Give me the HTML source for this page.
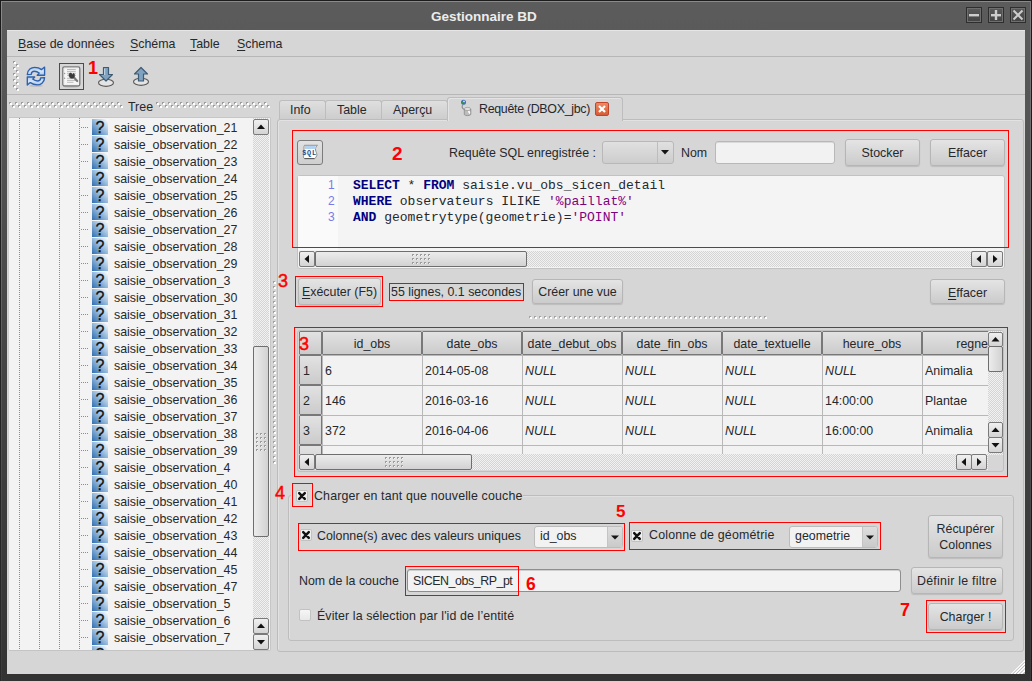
<!DOCTYPE html><html><head><meta charset="utf-8"><style>
*{box-sizing:border-box;margin:0;padding:0}
html,body{width:1032px;height:681px;overflow:hidden;background:#1a1a1a}
body{position:relative;font-family:"Liberation Sans",sans-serif;font-size:12.4px;color:#25282c}
.a{position:absolute}
svg{position:absolute;overflow:visible}
.t{position:absolute;white-space:nowrap;line-height:14px}
.wb{position:absolute;top:7px;width:16px;height:16px;border:1px solid #2e2e2e;background:linear-gradient(#5a5a5a,#434343);box-shadow:inset 0 0 0 1px #6e6e6e}
.btn{position:absolute;border:1px solid #b6b6b6;border-radius:3px;background:linear-gradient(#e4e4e4,#cbcbcb);box-shadow:0 1px 1px rgba(0,0,0,.12)}
.btn>span{position:absolute;left:0;right:0;text-align:center;white-space:nowrap;line-height:14px}
.red{position:absolute;border:1px solid #f00}
.num{position:absolute;color:#f00;font-weight:bold;font-size:17px;line-height:18px;white-space:nowrap}
.hl{position:absolute;height:1px;background:#b9b9b9}
.u{text-decoration:underline;text-underline-offset:1.5px}
.mono{font-family:"Liberation Mono",monospace;font-size:13px;line-height:16px}
.kw{color:#000080;font-weight:bold}
.st{color:#7f007f}
.cell{position:absolute;white-space:nowrap;line-height:14px}
.i{font-style:italic}
</style></head><body>
<div class="a" style="left:0px;top:0px;width:1032px;height:681px;background:linear-gradient(#5c5c5c 0px,#5a5a5a 30px,#474747 330px,#333 681px)"></div>
<div class="a" style="left:0px;top:0px;width:1px;height:681px;background:linear-gradient(#1a1a1a,#2a2a2a)"></div>
<div class="a" style="left:0px;top:0px;width:1032px;height:1px;background:#1c1c1c"></div>
<div class="a" style="left:1031px;top:0px;width:1px;height:681px;background:#1c1c1c"></div>
<div class="a" style="left:1px;top:1px;width:1px;height:680px;background:linear-gradient(#8a8a8a,#555 400px,#3a3a3a)"></div>
<div class="a" style="left:1px;top:1px;width:1030px;height:1px;background:#8a8a8a"></div>
<div class="a" style="left:1030px;top:1px;width:1px;height:680px;background:linear-gradient(#7a7a7a,#5e5e5e 300px,#3a3a3a)"></div>
<div class="t" style="left:431px;top:10px;color:#ececec;font-weight:bold;font-size:13.5px">Gestionnaire BD</div>
<div class="wb" style="left:966px"></div>
<div class="wb" style="left:988px"></div>
<div class="wb" style="left:1010px"></div>
<svg style="left:966px;top:7px" width="16" height="16"><rect x="3" y="7" width="10" height="2.4" fill="#cdcdcd"/></svg>
<svg style="left:988px;top:7px" width="16" height="16"><rect x="3" y="7" width="10" height="2.4" fill="#cdcdcd"/><rect x="6.8" y="3" width="2.4" height="10" fill="#cdcdcd"/></svg>
<svg style="left:1010px;top:7px" width="16" height="16"><path d="M3.5 3.5L12.5 12.5M12.5 3.5L3.5 12.5" stroke="#cdcdcd" stroke-width="2"/></svg>
<div class="a" style="left:7px;top:30px;width:1018px;height:644px;background:#d6d6d6"></div>
<div class="a" style="left:7px;top:30px;width:1018px;height:1px;background:#e6e6e6"></div>
<div class="t" style="left:18px;top:37px;"><span class="u">B</span>ase de données</div>
<div class="t" style="left:130px;top:37px;"><span class="u">S</span>chéma</div>
<div class="t" style="left:190px;top:37px;"><span class="u">T</span>able</div>
<div class="t" style="left:237px;top:37px;"><span class="u">S</span>chema</div>
<div class="a" style="left:7px;top:56px;width:1018px;height:1px;background:#b7b7b7"></div>
<svg style="left:0;top:0" width="30" height="100"><rect x="13" y="61" width="2" height="2" fill="#9a9a9a"/><rect x="14" y="62" width="2" height="2" fill="#fff"/><rect x="16" y="64" width="2" height="2" fill="#9a9a9a"/><rect x="17" y="65" width="2" height="2" fill="#fff"/><rect x="13" y="67" width="2" height="2" fill="#9a9a9a"/><rect x="14" y="68" width="2" height="2" fill="#fff"/><rect x="16" y="70" width="2" height="2" fill="#9a9a9a"/><rect x="17" y="71" width="2" height="2" fill="#fff"/><rect x="13" y="73" width="2" height="2" fill="#9a9a9a"/><rect x="14" y="74" width="2" height="2" fill="#fff"/><rect x="16" y="76" width="2" height="2" fill="#9a9a9a"/><rect x="17" y="77" width="2" height="2" fill="#fff"/><rect x="13" y="79" width="2" height="2" fill="#9a9a9a"/><rect x="14" y="80" width="2" height="2" fill="#fff"/><rect x="16" y="82" width="2" height="2" fill="#9a9a9a"/><rect x="17" y="83" width="2" height="2" fill="#fff"/><rect x="13" y="85" width="2" height="2" fill="#9a9a9a"/><rect x="14" y="86" width="2" height="2" fill="#fff"/><rect x="16" y="88" width="2" height="2" fill="#9a9a9a"/><rect x="17" y="89" width="2" height="2" fill="#fff"/></svg>
<svg style="left:24px;top:64px" width="24" height="24" viewBox="0 0 24 24">
<defs><linearGradient id="rg" x1="0" y1="0" x2="0" y2="1"><stop offset="0" stop-color="#9fc0e6"/><stop offset=".5" stop-color="#d6e6f7"/><stop offset="1" stop-color="#a9c7ea"/></linearGradient></defs>
<ellipse cx="12" cy="21.8" rx="7" ry="1.2" fill="#000" opacity=".10"/>
<g id="ra"><path d="M3.3 10.6 C3.5 5.5 7.5 3.3 10.5 3.3 C13.5 3.3 15.8 4.2 17.6 5.6 L20.6 3.1 L20.6 11.2 L13.2 11.2 L15.2 9.1 C13.8 7.9 12.2 7.2 10.5 7.2 C8.8 7.2 7.3 8.3 7.3 10.3 Z" fill="url(#rg)" stroke="#2f62ad" stroke-width="1.35" stroke-linejoin="round"/></g>
<path d="M3.3 10.6 C3.5 5.5 7.5 3.3 10.5 3.3 C13.5 3.3 15.8 4.2 17.6 5.6 L20.6 3.1 L20.6 11.2 L13.2 11.2 L15.2 9.1 C13.8 7.9 12.2 7.2 10.5 7.2 C8.8 7.2 7.3 8.3 7.3 10.3 Z" transform="rotate(180 11.95 12.1)" fill="url(#rg)" stroke="#2f62ad" stroke-width="1.35" stroke-linejoin="round"/>
</svg>
<svg style="left:61px;top:65px" width="21" height="23" viewBox="0 0 21 23">
<ellipse cx="10" cy="21.4" rx="8" ry="1.2" fill="#000" opacity=".16"/>
<rect x="1.8" y="1.8" width="17" height="19" rx="1.6" fill="#fdfdfd" stroke="#787878" stroke-width="1.3"/>
<rect x="3.2" y="3.2" width="14" height="16" fill="#f6f6f6" stroke="#e2e2e2" stroke-width=".5"/>
<path d="M6 4.5h8.8M6 6.4h8.8M6 8.3h8.8M6 10.3h8.8M6 13.3h8.8M6 15.4h8.8M6 17.3h6.5" stroke="#b2b2b2" stroke-width=".9"/>
<circle cx="3.6" cy="8.5" r=".7" fill="#999"/><circle cx="3.6" cy="13.3" r=".7" fill="#999"/>
<path d="M12.5 12 L16.2 16" stroke="#7a7a7a" stroke-width="2.2" stroke-linecap="round"/>
<path d="M8.1 9.6 C8.2 8.3 9.3 7.9 10.2 8.1 L11.2 9.8 L12.7 8.3 C13.9 9.2 14 11.6 12.6 12.8 C11 13.9 8.5 13.2 8.1 11 Z" fill="#3a3a3a" stroke="#3a3a3a" stroke-width=".6" stroke-linejoin="round"/>
</svg>
<div class="red" style="left:59px;top:63px;width:25px;height:27px"></div>
<div class="num" style="left:88px;top:59px;font-size:18px">1</div>
<svg style="left:97px;top:66px" width="19" height="22" viewBox="0 0 19 22">
<ellipse cx="9" cy="16.8" rx="7.5" ry="3.6" fill="#e4e4e4" stroke="#5a5a5a" stroke-width="1.1"/>
<path d="M6.5 1.5 H11.5 V8.5 H15.5 L9 15 L2.5 8.5 H6.5 Z" fill="#7fa2c0" stroke="#3d5b75" stroke-width="1.2" stroke-linejoin="round"/>
<path d="M7.6 2.5 V9" stroke="#b9d0e2" stroke-width="1.2"/>
</svg>
<svg style="left:132px;top:66px" width="19" height="22" viewBox="0 0 19 22">
<ellipse cx="9" cy="15.8" rx="7.5" ry="3.6" fill="#e4e4e4" stroke="#5a5a5a" stroke-width="1.1"/>
<path d="M6.5 15 V8 H2.5 L9 1.5 L15.5 8 H11.5 V15 Z" fill="#7fa2c0" stroke="#3d5b75" stroke-width="1.2" stroke-linejoin="round"/>
</svg>
<div class="a" style="left:7px;top:94px;width:1018px;height:1px;background:#b7b7b7"></div>
<svg style="left:0;top:0" width="280" height="120"><rect x="9" y="102" width="2" height="2" fill="#9c9c9c"/><rect x="10" y="103" width="2" height="2" fill="#fff"/><rect x="12" y="105" width="2" height="2" fill="#9c9c9c"/><rect x="13" y="106" width="2" height="2" fill="#fff"/><rect x="15" y="102" width="2" height="2" fill="#9c9c9c"/><rect x="16" y="103" width="2" height="2" fill="#fff"/><rect x="18" y="105" width="2" height="2" fill="#9c9c9c"/><rect x="19" y="106" width="2" height="2" fill="#fff"/><rect x="21" y="102" width="2" height="2" fill="#9c9c9c"/><rect x="22" y="103" width="2" height="2" fill="#fff"/><rect x="24" y="105" width="2" height="2" fill="#9c9c9c"/><rect x="25" y="106" width="2" height="2" fill="#fff"/><rect x="27" y="102" width="2" height="2" fill="#9c9c9c"/><rect x="28" y="103" width="2" height="2" fill="#fff"/><rect x="30" y="105" width="2" height="2" fill="#9c9c9c"/><rect x="31" y="106" width="2" height="2" fill="#fff"/><rect x="33" y="102" width="2" height="2" fill="#9c9c9c"/><rect x="34" y="103" width="2" height="2" fill="#fff"/><rect x="36" y="105" width="2" height="2" fill="#9c9c9c"/><rect x="37" y="106" width="2" height="2" fill="#fff"/><rect x="39" y="102" width="2" height="2" fill="#9c9c9c"/><rect x="40" y="103" width="2" height="2" fill="#fff"/><rect x="42" y="105" width="2" height="2" fill="#9c9c9c"/><rect x="43" y="106" width="2" height="2" fill="#fff"/><rect x="45" y="102" width="2" height="2" fill="#9c9c9c"/><rect x="46" y="103" width="2" height="2" fill="#fff"/><rect x="48" y="105" width="2" height="2" fill="#9c9c9c"/><rect x="49" y="106" width="2" height="2" fill="#fff"/><rect x="51" y="102" width="2" height="2" fill="#9c9c9c"/><rect x="52" y="103" width="2" height="2" fill="#fff"/><rect x="54" y="105" width="2" height="2" fill="#9c9c9c"/><rect x="55" y="106" width="2" height="2" fill="#fff"/><rect x="57" y="102" width="2" height="2" fill="#9c9c9c"/><rect x="58" y="103" width="2" height="2" fill="#fff"/><rect x="60" y="105" width="2" height="2" fill="#9c9c9c"/><rect x="61" y="106" width="2" height="2" fill="#fff"/><rect x="63" y="102" width="2" height="2" fill="#9c9c9c"/><rect x="64" y="103" width="2" height="2" fill="#fff"/><rect x="66" y="105" width="2" height="2" fill="#9c9c9c"/><rect x="67" y="106" width="2" height="2" fill="#fff"/><rect x="69" y="102" width="2" height="2" fill="#9c9c9c"/><rect x="70" y="103" width="2" height="2" fill="#fff"/><rect x="72" y="105" width="2" height="2" fill="#9c9c9c"/><rect x="73" y="106" width="2" height="2" fill="#fff"/><rect x="75" y="102" width="2" height="2" fill="#9c9c9c"/><rect x="76" y="103" width="2" height="2" fill="#fff"/><rect x="78" y="105" width="2" height="2" fill="#9c9c9c"/><rect x="79" y="106" width="2" height="2" fill="#fff"/><rect x="81" y="102" width="2" height="2" fill="#9c9c9c"/><rect x="82" y="103" width="2" height="2" fill="#fff"/><rect x="84" y="105" width="2" height="2" fill="#9c9c9c"/><rect x="85" y="106" width="2" height="2" fill="#fff"/><rect x="87" y="102" width="2" height="2" fill="#9c9c9c"/><rect x="88" y="103" width="2" height="2" fill="#fff"/><rect x="90" y="105" width="2" height="2" fill="#9c9c9c"/><rect x="91" y="106" width="2" height="2" fill="#fff"/><rect x="93" y="102" width="2" height="2" fill="#9c9c9c"/><rect x="94" y="103" width="2" height="2" fill="#fff"/><rect x="96" y="105" width="2" height="2" fill="#9c9c9c"/><rect x="97" y="106" width="2" height="2" fill="#fff"/><rect x="99" y="102" width="2" height="2" fill="#9c9c9c"/><rect x="100" y="103" width="2" height="2" fill="#fff"/><rect x="102" y="105" width="2" height="2" fill="#9c9c9c"/><rect x="103" y="106" width="2" height="2" fill="#fff"/><rect x="105" y="102" width="2" height="2" fill="#9c9c9c"/><rect x="106" y="103" width="2" height="2" fill="#fff"/><rect x="108" y="105" width="2" height="2" fill="#9c9c9c"/><rect x="109" y="106" width="2" height="2" fill="#fff"/><rect x="111" y="102" width="2" height="2" fill="#9c9c9c"/><rect x="112" y="103" width="2" height="2" fill="#fff"/><rect x="114" y="105" width="2" height="2" fill="#9c9c9c"/><rect x="115" y="106" width="2" height="2" fill="#fff"/><rect x="117" y="102" width="2" height="2" fill="#9c9c9c"/><rect x="118" y="103" width="2" height="2" fill="#fff"/><rect x="120" y="105" width="2" height="2" fill="#9c9c9c"/><rect x="121" y="106" width="2" height="2" fill="#fff"/><rect x="156" y="102" width="2" height="2" fill="#9c9c9c"/><rect x="157" y="103" width="2" height="2" fill="#fff"/><rect x="159" y="105" width="2" height="2" fill="#9c9c9c"/><rect x="160" y="106" width="2" height="2" fill="#fff"/><rect x="162" y="102" width="2" height="2" fill="#9c9c9c"/><rect x="163" y="103" width="2" height="2" fill="#fff"/><rect x="165" y="105" width="2" height="2" fill="#9c9c9c"/><rect x="166" y="106" width="2" height="2" fill="#fff"/><rect x="168" y="102" width="2" height="2" fill="#9c9c9c"/><rect x="169" y="103" width="2" height="2" fill="#fff"/><rect x="171" y="105" width="2" height="2" fill="#9c9c9c"/><rect x="172" y="106" width="2" height="2" fill="#fff"/><rect x="174" y="102" width="2" height="2" fill="#9c9c9c"/><rect x="175" y="103" width="2" height="2" fill="#fff"/><rect x="177" y="105" width="2" height="2" fill="#9c9c9c"/><rect x="178" y="106" width="2" height="2" fill="#fff"/><rect x="180" y="102" width="2" height="2" fill="#9c9c9c"/><rect x="181" y="103" width="2" height="2" fill="#fff"/><rect x="183" y="105" width="2" height="2" fill="#9c9c9c"/><rect x="184" y="106" width="2" height="2" fill="#fff"/><rect x="186" y="102" width="2" height="2" fill="#9c9c9c"/><rect x="187" y="103" width="2" height="2" fill="#fff"/><rect x="189" y="105" width="2" height="2" fill="#9c9c9c"/><rect x="190" y="106" width="2" height="2" fill="#fff"/><rect x="192" y="102" width="2" height="2" fill="#9c9c9c"/><rect x="193" y="103" width="2" height="2" fill="#fff"/><rect x="195" y="105" width="2" height="2" fill="#9c9c9c"/><rect x="196" y="106" width="2" height="2" fill="#fff"/><rect x="198" y="102" width="2" height="2" fill="#9c9c9c"/><rect x="199" y="103" width="2" height="2" fill="#fff"/><rect x="201" y="105" width="2" height="2" fill="#9c9c9c"/><rect x="202" y="106" width="2" height="2" fill="#fff"/><rect x="204" y="102" width="2" height="2" fill="#9c9c9c"/><rect x="205" y="103" width="2" height="2" fill="#fff"/><rect x="207" y="105" width="2" height="2" fill="#9c9c9c"/><rect x="208" y="106" width="2" height="2" fill="#fff"/><rect x="210" y="102" width="2" height="2" fill="#9c9c9c"/><rect x="211" y="103" width="2" height="2" fill="#fff"/><rect x="213" y="105" width="2" height="2" fill="#9c9c9c"/><rect x="214" y="106" width="2" height="2" fill="#fff"/><rect x="216" y="102" width="2" height="2" fill="#9c9c9c"/><rect x="217" y="103" width="2" height="2" fill="#fff"/><rect x="219" y="105" width="2" height="2" fill="#9c9c9c"/><rect x="220" y="106" width="2" height="2" fill="#fff"/><rect x="222" y="102" width="2" height="2" fill="#9c9c9c"/><rect x="223" y="103" width="2" height="2" fill="#fff"/><rect x="225" y="105" width="2" height="2" fill="#9c9c9c"/><rect x="226" y="106" width="2" height="2" fill="#fff"/><rect x="228" y="102" width="2" height="2" fill="#9c9c9c"/><rect x="229" y="103" width="2" height="2" fill="#fff"/><rect x="231" y="105" width="2" height="2" fill="#9c9c9c"/><rect x="232" y="106" width="2" height="2" fill="#fff"/><rect x="234" y="102" width="2" height="2" fill="#9c9c9c"/><rect x="235" y="103" width="2" height="2" fill="#fff"/><rect x="237" y="105" width="2" height="2" fill="#9c9c9c"/><rect x="238" y="106" width="2" height="2" fill="#fff"/><rect x="240" y="102" width="2" height="2" fill="#9c9c9c"/><rect x="241" y="103" width="2" height="2" fill="#fff"/><rect x="243" y="105" width="2" height="2" fill="#9c9c9c"/><rect x="244" y="106" width="2" height="2" fill="#fff"/><rect x="246" y="102" width="2" height="2" fill="#9c9c9c"/><rect x="247" y="103" width="2" height="2" fill="#fff"/><rect x="249" y="105" width="2" height="2" fill="#9c9c9c"/><rect x="250" y="106" width="2" height="2" fill="#fff"/><rect x="252" y="102" width="2" height="2" fill="#9c9c9c"/><rect x="253" y="103" width="2" height="2" fill="#fff"/><rect x="255" y="105" width="2" height="2" fill="#9c9c9c"/><rect x="256" y="106" width="2" height="2" fill="#fff"/><rect x="258" y="102" width="2" height="2" fill="#9c9c9c"/><rect x="259" y="103" width="2" height="2" fill="#fff"/><rect x="261" y="105" width="2" height="2" fill="#9c9c9c"/><rect x="262" y="106" width="2" height="2" fill="#fff"/><rect x="264" y="102" width="2" height="2" fill="#9c9c9c"/><rect x="265" y="103" width="2" height="2" fill="#fff"/><rect x="267" y="105" width="2" height="2" fill="#9c9c9c"/><rect x="268" y="106" width="2" height="2" fill="#fff"/></svg>
<div class="t" style="left:128px;top:100px;">Tree</div>
<div class="a" style="left:8px;top:117px;width:263px;height:534px;background:#f3f3f3;border-top:1px solid #c6c6c6;border-left:1px solid #cfcfcf;border-right:1px solid #c6c6c6;border-bottom:1px solid #c4c4c4;border-radius:2px"></div>
<div class="a" style="left:9px;top:118px;width:244px;height:532px;overflow:hidden">
<svg style="left:0;top:0" width="244" height="533"><defs><pattern id="vd" width="1" height="2" patternUnits="userSpaceOnUse"><rect width="1" height="1" fill="#8c8c8c"/></pattern></defs><rect x="10" y="0" width="1" height="533" fill="url(#vd)"/><rect x="30" y="0" width="1" height="533" fill="url(#vd)"/><rect x="50" y="0" width="1" height="533" fill="url(#vd)"/><rect x="70" y="0" width="1" height="533" fill="url(#vd)"/><rect x="71" y="9" width="9" height="1" fill="url(#hd)"/><rect x="71" y="26" width="9" height="1" fill="url(#hd)"/><rect x="71" y="43" width="9" height="1" fill="url(#hd)"/><rect x="71" y="60" width="9" height="1" fill="url(#hd)"/><rect x="71" y="77" width="9" height="1" fill="url(#hd)"/><rect x="71" y="94" width="9" height="1" fill="url(#hd)"/><rect x="71" y="111" width="9" height="1" fill="url(#hd)"/><rect x="71" y="128" width="9" height="1" fill="url(#hd)"/><rect x="71" y="145" width="9" height="1" fill="url(#hd)"/><rect x="71" y="162" width="9" height="1" fill="url(#hd)"/><rect x="71" y="179" width="9" height="1" fill="url(#hd)"/><rect x="71" y="196" width="9" height="1" fill="url(#hd)"/><rect x="71" y="213" width="9" height="1" fill="url(#hd)"/><rect x="71" y="230" width="9" height="1" fill="url(#hd)"/><rect x="71" y="247" width="9" height="1" fill="url(#hd)"/><rect x="71" y="264" width="9" height="1" fill="url(#hd)"/><rect x="71" y="281" width="9" height="1" fill="url(#hd)"/><rect x="71" y="298" width="9" height="1" fill="url(#hd)"/><rect x="71" y="315" width="9" height="1" fill="url(#hd)"/><rect x="71" y="332" width="9" height="1" fill="url(#hd)"/><rect x="71" y="349" width="9" height="1" fill="url(#hd)"/><rect x="71" y="366" width="9" height="1" fill="url(#hd)"/><rect x="71" y="383" width="9" height="1" fill="url(#hd)"/><rect x="71" y="400" width="9" height="1" fill="url(#hd)"/><rect x="71" y="417" width="9" height="1" fill="url(#hd)"/><rect x="71" y="434" width="9" height="1" fill="url(#hd)"/><rect x="71" y="451" width="9" height="1" fill="url(#hd)"/><rect x="71" y="468" width="9" height="1" fill="url(#hd)"/><rect x="71" y="485" width="9" height="1" fill="url(#hd)"/><rect x="71" y="502" width="9" height="1" fill="url(#hd)"/><rect x="71" y="519" width="9" height="1" fill="url(#hd)"/><rect x="71" y="536" width="9" height="1" fill="url(#hd)"/><defs><pattern id="hd" width="2" height="1" patternUnits="userSpaceOnUse"><rect width="1" height="1" fill="#8c8c8c"/></pattern><linearGradient id="ig" x1="0" y1="1" x2="1" y2="0"><stop offset="0" stop-color="#2e6db0"/><stop offset=".55" stop-color="#9fc0e0"/><stop offset="1" stop-color="#ffffff"/></linearGradient></defs><rect x="83" y="1" width="16" height="16" fill="url(#ig)"/><rect x="83" y="18" width="16" height="16" fill="url(#ig)"/><rect x="83" y="35" width="16" height="16" fill="url(#ig)"/><rect x="83" y="52" width="16" height="16" fill="url(#ig)"/><rect x="83" y="69" width="16" height="16" fill="url(#ig)"/><rect x="83" y="86" width="16" height="16" fill="url(#ig)"/><rect x="83" y="103" width="16" height="16" fill="url(#ig)"/><rect x="83" y="120" width="16" height="16" fill="url(#ig)"/><rect x="83" y="137" width="16" height="16" fill="url(#ig)"/><rect x="83" y="154" width="16" height="16" fill="url(#ig)"/><rect x="83" y="171" width="16" height="16" fill="url(#ig)"/><rect x="83" y="188" width="16" height="16" fill="url(#ig)"/><rect x="83" y="205" width="16" height="16" fill="url(#ig)"/><rect x="83" y="222" width="16" height="16" fill="url(#ig)"/><rect x="83" y="239" width="16" height="16" fill="url(#ig)"/><rect x="83" y="256" width="16" height="16" fill="url(#ig)"/><rect x="83" y="273" width="16" height="16" fill="url(#ig)"/><rect x="83" y="290" width="16" height="16" fill="url(#ig)"/><rect x="83" y="307" width="16" height="16" fill="url(#ig)"/><rect x="83" y="324" width="16" height="16" fill="url(#ig)"/><rect x="83" y="341" width="16" height="16" fill="url(#ig)"/><rect x="83" y="358" width="16" height="16" fill="url(#ig)"/><rect x="83" y="375" width="16" height="16" fill="url(#ig)"/><rect x="83" y="392" width="16" height="16" fill="url(#ig)"/><rect x="83" y="409" width="16" height="16" fill="url(#ig)"/><rect x="83" y="426" width="16" height="16" fill="url(#ig)"/><rect x="83" y="443" width="16" height="16" fill="url(#ig)"/><rect x="83" y="460" width="16" height="16" fill="url(#ig)"/><rect x="83" y="477" width="16" height="16" fill="url(#ig)"/><rect x="83" y="494" width="16" height="16" fill="url(#ig)"/><rect x="83" y="511" width="16" height="16" fill="url(#ig)"/><rect x="83" y="528" width="16" height="16" fill="url(#ig)"/></svg>
<div class="t" style="left:83px;top:1.5px;width:16px;text-align:center;font:16px/16px 'Liberation Sans';color:#111;-webkit-text-stroke:.3px #111">?</div>
<div class="t" style="left:105px;top:3px">saisie_observation_21</div>
<div class="t" style="left:83px;top:18.5px;width:16px;text-align:center;font:16px/16px 'Liberation Sans';color:#111;-webkit-text-stroke:.3px #111">?</div>
<div class="t" style="left:105px;top:20px">saisie_observation_22</div>
<div class="t" style="left:83px;top:35.5px;width:16px;text-align:center;font:16px/16px 'Liberation Sans';color:#111;-webkit-text-stroke:.3px #111">?</div>
<div class="t" style="left:105px;top:37px">saisie_observation_23</div>
<div class="t" style="left:83px;top:52.5px;width:16px;text-align:center;font:16px/16px 'Liberation Sans';color:#111;-webkit-text-stroke:.3px #111">?</div>
<div class="t" style="left:105px;top:54px">saisie_observation_24</div>
<div class="t" style="left:83px;top:69.5px;width:16px;text-align:center;font:16px/16px 'Liberation Sans';color:#111;-webkit-text-stroke:.3px #111">?</div>
<div class="t" style="left:105px;top:71px">saisie_observation_25</div>
<div class="t" style="left:83px;top:86.5px;width:16px;text-align:center;font:16px/16px 'Liberation Sans';color:#111;-webkit-text-stroke:.3px #111">?</div>
<div class="t" style="left:105px;top:88px">saisie_observation_26</div>
<div class="t" style="left:83px;top:103.5px;width:16px;text-align:center;font:16px/16px 'Liberation Sans';color:#111;-webkit-text-stroke:.3px #111">?</div>
<div class="t" style="left:105px;top:105px">saisie_observation_27</div>
<div class="t" style="left:83px;top:120.5px;width:16px;text-align:center;font:16px/16px 'Liberation Sans';color:#111;-webkit-text-stroke:.3px #111">?</div>
<div class="t" style="left:105px;top:122px">saisie_observation_28</div>
<div class="t" style="left:83px;top:137.5px;width:16px;text-align:center;font:16px/16px 'Liberation Sans';color:#111;-webkit-text-stroke:.3px #111">?</div>
<div class="t" style="left:105px;top:139px">saisie_observation_29</div>
<div class="t" style="left:83px;top:154.5px;width:16px;text-align:center;font:16px/16px 'Liberation Sans';color:#111;-webkit-text-stroke:.3px #111">?</div>
<div class="t" style="left:105px;top:156px">saisie_observation_3</div>
<div class="t" style="left:83px;top:171.5px;width:16px;text-align:center;font:16px/16px 'Liberation Sans';color:#111;-webkit-text-stroke:.3px #111">?</div>
<div class="t" style="left:105px;top:173px">saisie_observation_30</div>
<div class="t" style="left:83px;top:188.5px;width:16px;text-align:center;font:16px/16px 'Liberation Sans';color:#111;-webkit-text-stroke:.3px #111">?</div>
<div class="t" style="left:105px;top:190px">saisie_observation_31</div>
<div class="t" style="left:83px;top:205.5px;width:16px;text-align:center;font:16px/16px 'Liberation Sans';color:#111;-webkit-text-stroke:.3px #111">?</div>
<div class="t" style="left:105px;top:207px">saisie_observation_32</div>
<div class="t" style="left:83px;top:222.5px;width:16px;text-align:center;font:16px/16px 'Liberation Sans';color:#111;-webkit-text-stroke:.3px #111">?</div>
<div class="t" style="left:105px;top:224px">saisie_observation_33</div>
<div class="t" style="left:83px;top:239.5px;width:16px;text-align:center;font:16px/16px 'Liberation Sans';color:#111;-webkit-text-stroke:.3px #111">?</div>
<div class="t" style="left:105px;top:241px">saisie_observation_34</div>
<div class="t" style="left:83px;top:256.5px;width:16px;text-align:center;font:16px/16px 'Liberation Sans';color:#111;-webkit-text-stroke:.3px #111">?</div>
<div class="t" style="left:105px;top:258px">saisie_observation_35</div>
<div class="t" style="left:83px;top:273.5px;width:16px;text-align:center;font:16px/16px 'Liberation Sans';color:#111;-webkit-text-stroke:.3px #111">?</div>
<div class="t" style="left:105px;top:275px">saisie_observation_36</div>
<div class="t" style="left:83px;top:290.5px;width:16px;text-align:center;font:16px/16px 'Liberation Sans';color:#111;-webkit-text-stroke:.3px #111">?</div>
<div class="t" style="left:105px;top:292px">saisie_observation_37</div>
<div class="t" style="left:83px;top:307.5px;width:16px;text-align:center;font:16px/16px 'Liberation Sans';color:#111;-webkit-text-stroke:.3px #111">?</div>
<div class="t" style="left:105px;top:309px">saisie_observation_38</div>
<div class="t" style="left:83px;top:324.5px;width:16px;text-align:center;font:16px/16px 'Liberation Sans';color:#111;-webkit-text-stroke:.3px #111">?</div>
<div class="t" style="left:105px;top:326px">saisie_observation_39</div>
<div class="t" style="left:83px;top:341.5px;width:16px;text-align:center;font:16px/16px 'Liberation Sans';color:#111;-webkit-text-stroke:.3px #111">?</div>
<div class="t" style="left:105px;top:343px">saisie_observation_4</div>
<div class="t" style="left:83px;top:358.5px;width:16px;text-align:center;font:16px/16px 'Liberation Sans';color:#111;-webkit-text-stroke:.3px #111">?</div>
<div class="t" style="left:105px;top:360px">saisie_observation_40</div>
<div class="t" style="left:83px;top:375.5px;width:16px;text-align:center;font:16px/16px 'Liberation Sans';color:#111;-webkit-text-stroke:.3px #111">?</div>
<div class="t" style="left:105px;top:377px">saisie_observation_41</div>
<div class="t" style="left:83px;top:392.5px;width:16px;text-align:center;font:16px/16px 'Liberation Sans';color:#111;-webkit-text-stroke:.3px #111">?</div>
<div class="t" style="left:105px;top:394px">saisie_observation_42</div>
<div class="t" style="left:83px;top:409.5px;width:16px;text-align:center;font:16px/16px 'Liberation Sans';color:#111;-webkit-text-stroke:.3px #111">?</div>
<div class="t" style="left:105px;top:411px">saisie_observation_43</div>
<div class="t" style="left:83px;top:426.5px;width:16px;text-align:center;font:16px/16px 'Liberation Sans';color:#111;-webkit-text-stroke:.3px #111">?</div>
<div class="t" style="left:105px;top:428px">saisie_observation_44</div>
<div class="t" style="left:83px;top:443.5px;width:16px;text-align:center;font:16px/16px 'Liberation Sans';color:#111;-webkit-text-stroke:.3px #111">?</div>
<div class="t" style="left:105px;top:445px">saisie_observation_45</div>
<div class="t" style="left:83px;top:460.5px;width:16px;text-align:center;font:16px/16px 'Liberation Sans';color:#111;-webkit-text-stroke:.3px #111">?</div>
<div class="t" style="left:105px;top:462px">saisie_observation_47</div>
<div class="t" style="left:83px;top:477.5px;width:16px;text-align:center;font:16px/16px 'Liberation Sans';color:#111;-webkit-text-stroke:.3px #111">?</div>
<div class="t" style="left:105px;top:479px">saisie_observation_5</div>
<div class="t" style="left:83px;top:494.5px;width:16px;text-align:center;font:16px/16px 'Liberation Sans';color:#111;-webkit-text-stroke:.3px #111">?</div>
<div class="t" style="left:105px;top:496px">saisie_observation_6</div>
<div class="t" style="left:83px;top:511.5px;width:16px;text-align:center;font:16px/16px 'Liberation Sans';color:#111;-webkit-text-stroke:.3px #111">?</div>
<div class="t" style="left:105px;top:513px">saisie_observation_7</div>
<div class="t" style="left:83px;top:528.5px;width:16px;text-align:center;font:16px/16px 'Liberation Sans';color:#111;-webkit-text-stroke:.3px #111">?</div>
<div class="t" style="left:105px;top:530px">saisie_observation_8</div>
</div>
<svg style="left:253px;top:118px" width="16" height="532"><defs><pattern id="ck1" width="2" height="2" patternUnits="userSpaceOnUse"><rect width="2" height="2" fill="#f2f2f2"/><rect width="1" height="1" fill="#d4d4d4"/><rect x="1" y="1" width="1" height="1" fill="#d4d4d4"/></pattern></defs><rect width="16" height="532" fill="url(#ck1)"/></svg>
<div class="a" style="left:253px;top:119px;width:16px;height:16px;border:1px solid #7a7a7a;border-radius:2px;background:linear-gradient(#f0f0f0,#d4d4d4)"></div>
<svg style="left:0;top:0" width="1032" height="681"><path d="M257.0 129.0 L265.0 129.0 L261.0 124.5 Z" fill="#111"/></svg>
<div class="a" style="left:253px;top:346px;width:16px;height:191px;border:1px solid #6e6e6e;border-radius:2px;background:linear-gradient(90deg,#ececec,#d2d2d2)"></div>
<svg style="left:0;top:0" width="1032" height="681"><rect x="256" y="433" width="2" height="2" fill="#9c9c9c"/><rect x="257" y="434" width="1" height="1" fill="#f6f6f6"/><rect x="260" y="433" width="2" height="2" fill="#9c9c9c"/><rect x="261" y="434" width="1" height="1" fill="#f6f6f6"/><rect x="264" y="433" width="2" height="2" fill="#9c9c9c"/><rect x="265" y="434" width="1" height="1" fill="#f6f6f6"/><rect x="256" y="437" width="2" height="2" fill="#9c9c9c"/><rect x="257" y="438" width="1" height="1" fill="#f6f6f6"/><rect x="260" y="437" width="2" height="2" fill="#9c9c9c"/><rect x="261" y="438" width="1" height="1" fill="#f6f6f6"/><rect x="264" y="437" width="2" height="2" fill="#9c9c9c"/><rect x="265" y="438" width="1" height="1" fill="#f6f6f6"/><rect x="256" y="441" width="2" height="2" fill="#9c9c9c"/><rect x="257" y="442" width="1" height="1" fill="#f6f6f6"/><rect x="260" y="441" width="2" height="2" fill="#9c9c9c"/><rect x="261" y="442" width="1" height="1" fill="#f6f6f6"/><rect x="264" y="441" width="2" height="2" fill="#9c9c9c"/><rect x="265" y="442" width="1" height="1" fill="#f6f6f6"/><rect x="256" y="445" width="2" height="2" fill="#9c9c9c"/><rect x="257" y="446" width="1" height="1" fill="#f6f6f6"/><rect x="260" y="445" width="2" height="2" fill="#9c9c9c"/><rect x="261" y="446" width="1" height="1" fill="#f6f6f6"/><rect x="264" y="445" width="2" height="2" fill="#9c9c9c"/><rect x="265" y="446" width="1" height="1" fill="#f6f6f6"/><rect x="256" y="449" width="2" height="2" fill="#9c9c9c"/><rect x="257" y="450" width="1" height="1" fill="#f6f6f6"/><rect x="260" y="449" width="2" height="2" fill="#9c9c9c"/><rect x="261" y="450" width="1" height="1" fill="#f6f6f6"/><rect x="264" y="449" width="2" height="2" fill="#9c9c9c"/><rect x="265" y="450" width="1" height="1" fill="#f6f6f6"/></svg>
<div class="a" style="left:253px;top:618px;width:16px;height:16px;border:1px solid #7a7a7a;border-radius:2px;background:linear-gradient(#f0f0f0,#d4d4d4)"></div>
<svg style="left:0;top:0" width="1032" height="681"><path d="M257.0 628.0 L265.0 628.0 L261.0 623.5 Z" fill="#111"/></svg>
<div class="a" style="left:253px;top:634px;width:16px;height:16px;border:1px solid #7a7a7a;border-radius:2px;background:linear-gradient(#f0f0f0,#d4d4d4)"></div>
<svg style="left:0;top:0" width="1032" height="681"><path d="M257.0 640.0 L265.0 640.0 L261.0 644.5 Z" fill="#111"/></svg>
<svg style="left:0;top:0" width="1032" height="681"><rect x="273" y="281" width="2" height="2" fill="#a0a0a0"/><rect x="274" y="282" width="2" height="2" fill="#fff"/><rect x="273" y="286" width="2" height="2" fill="#a0a0a0"/><rect x="274" y="287" width="2" height="2" fill="#fff"/><rect x="273" y="291" width="2" height="2" fill="#a0a0a0"/><rect x="274" y="292" width="2" height="2" fill="#fff"/><rect x="273" y="296" width="2" height="2" fill="#a0a0a0"/><rect x="274" y="297" width="2" height="2" fill="#fff"/><rect x="273" y="301" width="2" height="2" fill="#a0a0a0"/><rect x="274" y="302" width="2" height="2" fill="#fff"/><rect x="273" y="306" width="2" height="2" fill="#a0a0a0"/><rect x="274" y="307" width="2" height="2" fill="#fff"/><rect x="273" y="311" width="2" height="2" fill="#a0a0a0"/><rect x="274" y="312" width="2" height="2" fill="#fff"/><rect x="273" y="316" width="2" height="2" fill="#a0a0a0"/><rect x="274" y="317" width="2" height="2" fill="#fff"/><rect x="273" y="321" width="2" height="2" fill="#a0a0a0"/><rect x="274" y="322" width="2" height="2" fill="#fff"/><rect x="273" y="326" width="2" height="2" fill="#a0a0a0"/><rect x="274" y="327" width="2" height="2" fill="#fff"/><rect x="273" y="331" width="2" height="2" fill="#a0a0a0"/><rect x="274" y="332" width="2" height="2" fill="#fff"/><rect x="273" y="336" width="2" height="2" fill="#a0a0a0"/><rect x="274" y="337" width="2" height="2" fill="#fff"/><rect x="273" y="341" width="2" height="2" fill="#a0a0a0"/><rect x="274" y="342" width="2" height="2" fill="#fff"/><rect x="273" y="346" width="2" height="2" fill="#a0a0a0"/><rect x="274" y="347" width="2" height="2" fill="#fff"/><rect x="273" y="351" width="2" height="2" fill="#a0a0a0"/><rect x="274" y="352" width="2" height="2" fill="#fff"/><rect x="273" y="356" width="2" height="2" fill="#a0a0a0"/><rect x="274" y="357" width="2" height="2" fill="#fff"/><rect x="273" y="361" width="2" height="2" fill="#a0a0a0"/><rect x="274" y="362" width="2" height="2" fill="#fff"/><rect x="273" y="366" width="2" height="2" fill="#a0a0a0"/><rect x="274" y="367" width="2" height="2" fill="#fff"/><rect x="273" y="371" width="2" height="2" fill="#a0a0a0"/><rect x="274" y="372" width="2" height="2" fill="#fff"/><rect x="273" y="376" width="2" height="2" fill="#a0a0a0"/><rect x="274" y="377" width="2" height="2" fill="#fff"/><rect x="273" y="381" width="2" height="2" fill="#a0a0a0"/><rect x="274" y="382" width="2" height="2" fill="#fff"/><rect x="273" y="386" width="2" height="2" fill="#a0a0a0"/><rect x="274" y="387" width="2" height="2" fill="#fff"/><rect x="273" y="391" width="2" height="2" fill="#a0a0a0"/><rect x="274" y="392" width="2" height="2" fill="#fff"/><rect x="273" y="396" width="2" height="2" fill="#a0a0a0"/><rect x="274" y="397" width="2" height="2" fill="#fff"/><rect x="273" y="401" width="2" height="2" fill="#a0a0a0"/><rect x="274" y="402" width="2" height="2" fill="#fff"/><rect x="273" y="406" width="2" height="2" fill="#a0a0a0"/><rect x="274" y="407" width="2" height="2" fill="#fff"/><rect x="273" y="411" width="2" height="2" fill="#a0a0a0"/><rect x="274" y="412" width="2" height="2" fill="#fff"/><rect x="273" y="416" width="2" height="2" fill="#a0a0a0"/><rect x="274" y="417" width="2" height="2" fill="#fff"/><rect x="273" y="421" width="2" height="2" fill="#a0a0a0"/><rect x="274" y="422" width="2" height="2" fill="#fff"/><rect x="273" y="426" width="2" height="2" fill="#a0a0a0"/><rect x="274" y="427" width="2" height="2" fill="#fff"/><rect x="273" y="431" width="2" height="2" fill="#a0a0a0"/><rect x="274" y="432" width="2" height="2" fill="#fff"/><rect x="273" y="436" width="2" height="2" fill="#a0a0a0"/><rect x="274" y="437" width="2" height="2" fill="#fff"/><rect x="273" y="441" width="2" height="2" fill="#a0a0a0"/><rect x="274" y="442" width="2" height="2" fill="#fff"/><rect x="273" y="446" width="2" height="2" fill="#a0a0a0"/><rect x="274" y="447" width="2" height="2" fill="#fff"/><rect x="273" y="451" width="2" height="2" fill="#a0a0a0"/><rect x="274" y="452" width="2" height="2" fill="#fff"/><rect x="273" y="456" width="2" height="2" fill="#a0a0a0"/><rect x="274" y="457" width="2" height="2" fill="#fff"/><rect x="273" y="461" width="2" height="2" fill="#a0a0a0"/><rect x="274" y="462" width="2" height="2" fill="#fff"/></svg>
<div class="a" style="left:277px;top:119px;width:747px;height:533px;border:1px solid #bcbcbc;border-radius:3px;background:#d6d6d6;box-shadow:inset 1px 1px 0 #e2e2e2"></div>
<div class="a" style="left:279px;top:100px;width:47px;height:19px;border:1px solid #bdbdbd;border-bottom:0;border-radius:3px 3px 0 0;background:linear-gradient(#dfdfdf,#cdcdcd)"></div>
<div class="t" style="left:290px;top:103px;">Info</div>
<div class="a" style="left:325px;top:100px;width:57px;height:19px;border:1px solid #bdbdbd;border-bottom:0;border-radius:3px 3px 0 0;background:linear-gradient(#dfdfdf,#cdcdcd)"></div>
<div class="t" style="left:337px;top:103px;">Table</div>
<div class="a" style="left:381px;top:100px;width:67px;height:19px;border:1px solid #bdbdbd;border-bottom:0;border-radius:3px 3px 0 0;background:linear-gradient(#dfdfdf,#cdcdcd)"></div>
<div class="t" style="left:393px;top:103px;">Aperçu</div>
<div class="a" style="left:447px;top:97px;width:176px;height:24px;border:1px solid #bdbdbd;border-bottom:0;border-radius:3px 3px 0 0;background:#d6d6d6;box-shadow:inset 1px 1px 0 #e4e4e4"></div>
<svg style="left:458px;top:98px" width="16" height="19" viewBox="0 0 16 19">
<path d="M5 6.5 C3.5 8.5 3.8 10.5 6.5 11.5" fill="none" stroke="#8a8a8a" stroke-width="1.1"/>
<circle cx="5.5" cy="4.2" r="2.5" fill="#3f6db0"/>
<path d="M4 3.2 L5.2 4.6 L4.2 5.8 Z M6.2 5.2 L7.6 5.8 L6.6 6.4 Z" fill="#3aa04a"/>
<circle cx="6" cy="3.4" r=".9" fill="#d8e4f0"/>
<path d="M6.3 11 L6.3 16.5 C7 18 12 18 12.8 16.5 L12.8 11 Z" fill="#bdbdbd"/>
<ellipse cx="9.55" cy="11" rx="3.25" ry="1.6" fill="#e0e0e0" stroke="#8c8c8c" stroke-width=".6"/>
<path d="M10.5 13 L12 15.5" stroke="#fff" stroke-width="1.6"/>
<path d="M6.3 11 L6.3 16.5 C7 18 12 18 12.8 16.5 L12.8 11" fill="none" stroke="#808080" stroke-width=".7"/>
</svg>
<div class="t" style="left:479px;top:102px;letter-spacing:-0.3px">Requête (DBOX_jbc)</div>
<div class="a" style="left:595px;top:102px;width:14px;height:14px;border:1px solid #c0452a;border-radius:2px;background:linear-gradient(#ee8a62,#d85a36)"></div>
<svg style="left:595px;top:102px" width="14" height="14"><path d="M4 4L10 10M10 4L4 10" stroke="#fff" stroke-width="2.2"/></svg>
<div class="a" style="left:297px;top:140px;width:26px;height:25px;border:1px solid #7c7c7c;border-radius:3px;background:linear-gradient(#e2e2e2,#cfcfcf)"></div>
<svg style="left:295px;top:138px" width="30" height="30" viewBox="0 0 30 30">
<path d="M9.5 7.3 H22.5 C21 8.5 20.3 10 20.5 12 C20.8 14 22.3 15.5 21.8 17.5 C21.5 19 20.5 20 19.5 20.6 H9.5 C8.2 19.5 8 18.5 9 17 V9 C9 8.2 9.2 7.7 9.5 7.3 Z" fill="#fdfdfd" stroke="#7a7a7a" stroke-width=".8"/>
<rect x="10" y="8" width="10.5" height="3" fill="#b3d2f2"/>
<path d="M9.5 20.6 H19.5" stroke="#555" stroke-width="1"/>
<text x="7.2" y="17.3" font-family="Liberation Mono" font-weight="bold" font-size="6.8" letter-spacing=".8" fill="#1d4a80">SQL</text>
</svg>
<div class="num" style="left:392px;top:145px;font-size:19px">2</div>
<div class="t" style="left:449px;top:146px;">Requête SQL enregistrée :</div>
<div class="a" style="left:602px;top:141px;width:72px;height:23px;border:1px solid #b8b8b8;border-radius:3px;background:linear-gradient(#e0e0e0,#cdcdcd)"></div>
<div class="a" style="left:657px;top:142px;width:1px;height:21px;background:#bdbdbd"></div>
<svg style="left:0;top:0" width="1032" height="681"><path d="M661 150 L669 150 L665 154.5 Z" fill="#151515"/></svg>
<div class="t" style="left:681px;top:146px;">Nom</div>
<div class="a" style="left:715px;top:141px;width:120px;height:23px;border:1px solid #b8b8b8;border-radius:3px;background:#f2f2f2;box-shadow:inset 0 1px 0 #dadada"></div>
<div class="btn" style="left:845px;top:139px;width:75px;height:27px;"><span style="top:6px">Stocker</span></div>
<div class="btn" style="left:930px;top:139px;width:75px;height:27px;"><span style="top:6px">Effacer</span></div>
<div class="a" style="left:297px;top:175px;width:708px;height:94px;border:1px solid #c2c2c2;border-radius:3px;background:#f4f4f4"></div>
<div class="a" style="left:298px;top:176px;width:40px;height:74px;background:#fafafa"></div>
<div class="t mono" style="left:328px;top:177px;color:#7a7ae6;font-family:'Liberation Sans';font-size:12px">1</div>
<div class="t mono" style="left:328px;top:193px;color:#7a7ae6;font-family:'Liberation Sans';font-size:12px">2</div>
<div class="t mono" style="left:328px;top:209px;color:#7a7ae6;font-family:'Liberation Sans';font-size:12px">3</div>
<div class="t mono" style="left:353px;top:178px"><span class="kw">SELECT</span> * <span class="kw">FROM</span> saisie.vu_obs_sicen_detail<br><span class="kw">WHERE</span> observateurs ILIKE <span class="st">'%paillat%'</span><br><span class="kw">AND</span> geometrytype(geometrie)=<span class="st">'POINT'</span></div>
<svg style="left:299px;top:251px" width="704" height="16"><defs><pattern id="ck2" width="2" height="2" patternUnits="userSpaceOnUse"><rect width="2" height="2" fill="#f2f2f2"/><rect width="1" height="1" fill="#d4d4d4"/><rect x="1" y="1" width="1" height="1" fill="#d4d4d4"/></pattern></defs><rect width="704" height="16" fill="url(#ck2)"/></svg>
<div class="a" style="left:299px;top:251px;width:16px;height:16px;border:1px solid #7a7a7a;border-radius:2px;background:linear-gradient(#f0f0f0,#d4d4d4)"></div>
<svg style="left:0;top:0" width="1032" height="681"><path d="M309.0 255.0 L309.0 263.0 L304.5 259.0 Z" fill="#111"/></svg>
<div class="a" style="left:315px;top:251px;width:212px;height:16px;border:1px solid #6e6e6e;border-radius:2px;background:linear-gradient(#ececec,#d2d2d2)"></div>
<svg style="left:0;top:0" width="1032" height="681"><rect x="412" y="254" width="2" height="2" fill="#9c9c9c"/><rect x="413" y="255" width="1" height="1" fill="#f6f6f6"/><rect x="416" y="254" width="2" height="2" fill="#9c9c9c"/><rect x="417" y="255" width="1" height="1" fill="#f6f6f6"/><rect x="420" y="254" width="2" height="2" fill="#9c9c9c"/><rect x="421" y="255" width="1" height="1" fill="#f6f6f6"/><rect x="424" y="254" width="2" height="2" fill="#9c9c9c"/><rect x="425" y="255" width="1" height="1" fill="#f6f6f6"/><rect x="428" y="254" width="2" height="2" fill="#9c9c9c"/><rect x="429" y="255" width="1" height="1" fill="#f6f6f6"/><rect x="412" y="258" width="2" height="2" fill="#9c9c9c"/><rect x="413" y="259" width="1" height="1" fill="#f6f6f6"/><rect x="416" y="258" width="2" height="2" fill="#9c9c9c"/><rect x="417" y="259" width="1" height="1" fill="#f6f6f6"/><rect x="420" y="258" width="2" height="2" fill="#9c9c9c"/><rect x="421" y="259" width="1" height="1" fill="#f6f6f6"/><rect x="424" y="258" width="2" height="2" fill="#9c9c9c"/><rect x="425" y="259" width="1" height="1" fill="#f6f6f6"/><rect x="428" y="258" width="2" height="2" fill="#9c9c9c"/><rect x="429" y="259" width="1" height="1" fill="#f6f6f6"/><rect x="412" y="262" width="2" height="2" fill="#9c9c9c"/><rect x="413" y="263" width="1" height="1" fill="#f6f6f6"/><rect x="416" y="262" width="2" height="2" fill="#9c9c9c"/><rect x="417" y="263" width="1" height="1" fill="#f6f6f6"/><rect x="420" y="262" width="2" height="2" fill="#9c9c9c"/><rect x="421" y="263" width="1" height="1" fill="#f6f6f6"/><rect x="424" y="262" width="2" height="2" fill="#9c9c9c"/><rect x="425" y="263" width="1" height="1" fill="#f6f6f6"/><rect x="428" y="262" width="2" height="2" fill="#9c9c9c"/><rect x="429" y="263" width="1" height="1" fill="#f6f6f6"/></svg>
<div class="a" style="left:971px;top:251px;width:16px;height:16px;border:1px solid #7a7a7a;border-radius:2px;background:linear-gradient(#f0f0f0,#d4d4d4)"></div>
<svg style="left:0;top:0" width="1032" height="681"><path d="M981.0 255.0 L981.0 263.0 L976.5 259.0 Z" fill="#111"/></svg>
<div class="a" style="left:987px;top:251px;width:16px;height:16px;border:1px solid #7a7a7a;border-radius:2px;background:linear-gradient(#f0f0f0,#d4d4d4)"></div>
<svg style="left:0;top:0" width="1032" height="681"><path d="M993.0 255.0 L993.0 263.0 L997.5 259.0 Z" fill="#111"/></svg>
<div class="red" style="left:292px;top:130px;width:717px;height:118px"></div>
<div class="num" style="left:278px;top:272px;font-size:18px;font-weight:normal;-webkit-text-stroke:.45px #f00">3</div>
<div class="btn" style="left:298px;top:278px;width:83px;height:27px;"><span style="top:6px"><span class="u">E</span>xécuter (F5)</span></div>
<div class="red" style="left:295px;top:276px;width:88px;height:31px"></div>
<div class="t" style="left:391px;top:285px;">55 lignes, 0.1 secondes</div>
<div class="red" style="left:389px;top:283px;width:135px;height:18px"></div>
<div class="btn" style="left:532px;top:279px;width:91px;height:25px;"><span style="top:5px">Créer une vue</span></div>
<div class="btn" style="left:930px;top:279px;width:75px;height:25px;"><span style="top:6px"><span class="u">E</span>ffacer</span></div>
<svg style="left:0;top:0" width="1032" height="681"><rect x="529" y="316" width="2" height="2" fill="#a4a4a4"/><rect x="530" y="317" width="2" height="2" fill="#fff"/><rect x="534" y="316" width="2" height="2" fill="#a4a4a4"/><rect x="535" y="317" width="2" height="2" fill="#fff"/><rect x="539" y="316" width="2" height="2" fill="#a4a4a4"/><rect x="540" y="317" width="2" height="2" fill="#fff"/><rect x="544" y="316" width="2" height="2" fill="#a4a4a4"/><rect x="545" y="317" width="2" height="2" fill="#fff"/><rect x="549" y="316" width="2" height="2" fill="#a4a4a4"/><rect x="550" y="317" width="2" height="2" fill="#fff"/><rect x="554" y="316" width="2" height="2" fill="#a4a4a4"/><rect x="555" y="317" width="2" height="2" fill="#fff"/><rect x="559" y="316" width="2" height="2" fill="#a4a4a4"/><rect x="560" y="317" width="2" height="2" fill="#fff"/><rect x="564" y="316" width="2" height="2" fill="#a4a4a4"/><rect x="565" y="317" width="2" height="2" fill="#fff"/><rect x="569" y="316" width="2" height="2" fill="#a4a4a4"/><rect x="570" y="317" width="2" height="2" fill="#fff"/><rect x="574" y="316" width="2" height="2" fill="#a4a4a4"/><rect x="575" y="317" width="2" height="2" fill="#fff"/><rect x="579" y="316" width="2" height="2" fill="#a4a4a4"/><rect x="580" y="317" width="2" height="2" fill="#fff"/><rect x="584" y="316" width="2" height="2" fill="#a4a4a4"/><rect x="585" y="317" width="2" height="2" fill="#fff"/><rect x="589" y="316" width="2" height="2" fill="#a4a4a4"/><rect x="590" y="317" width="2" height="2" fill="#fff"/><rect x="594" y="316" width="2" height="2" fill="#a4a4a4"/><rect x="595" y="317" width="2" height="2" fill="#fff"/><rect x="599" y="316" width="2" height="2" fill="#a4a4a4"/><rect x="600" y="317" width="2" height="2" fill="#fff"/><rect x="604" y="316" width="2" height="2" fill="#a4a4a4"/><rect x="605" y="317" width="2" height="2" fill="#fff"/><rect x="609" y="316" width="2" height="2" fill="#a4a4a4"/><rect x="610" y="317" width="2" height="2" fill="#fff"/><rect x="614" y="316" width="2" height="2" fill="#a4a4a4"/><rect x="615" y="317" width="2" height="2" fill="#fff"/><rect x="619" y="316" width="2" height="2" fill="#a4a4a4"/><rect x="620" y="317" width="2" height="2" fill="#fff"/><rect x="624" y="316" width="2" height="2" fill="#a4a4a4"/><rect x="625" y="317" width="2" height="2" fill="#fff"/><rect x="629" y="316" width="2" height="2" fill="#a4a4a4"/><rect x="630" y="317" width="2" height="2" fill="#fff"/><rect x="634" y="316" width="2" height="2" fill="#a4a4a4"/><rect x="635" y="317" width="2" height="2" fill="#fff"/><rect x="639" y="316" width="2" height="2" fill="#a4a4a4"/><rect x="640" y="317" width="2" height="2" fill="#fff"/><rect x="644" y="316" width="2" height="2" fill="#a4a4a4"/><rect x="645" y="317" width="2" height="2" fill="#fff"/><rect x="649" y="316" width="2" height="2" fill="#a4a4a4"/><rect x="650" y="317" width="2" height="2" fill="#fff"/><rect x="654" y="316" width="2" height="2" fill="#a4a4a4"/><rect x="655" y="317" width="2" height="2" fill="#fff"/><rect x="659" y="316" width="2" height="2" fill="#a4a4a4"/><rect x="660" y="317" width="2" height="2" fill="#fff"/><rect x="664" y="316" width="2" height="2" fill="#a4a4a4"/><rect x="665" y="317" width="2" height="2" fill="#fff"/><rect x="669" y="316" width="2" height="2" fill="#a4a4a4"/><rect x="670" y="317" width="2" height="2" fill="#fff"/><rect x="674" y="316" width="2" height="2" fill="#a4a4a4"/><rect x="675" y="317" width="2" height="2" fill="#fff"/><rect x="679" y="316" width="2" height="2" fill="#a4a4a4"/><rect x="680" y="317" width="2" height="2" fill="#fff"/><rect x="684" y="316" width="2" height="2" fill="#a4a4a4"/><rect x="685" y="317" width="2" height="2" fill="#fff"/><rect x="689" y="316" width="2" height="2" fill="#a4a4a4"/><rect x="690" y="317" width="2" height="2" fill="#fff"/><rect x="694" y="316" width="2" height="2" fill="#a4a4a4"/><rect x="695" y="317" width="2" height="2" fill="#fff"/><rect x="699" y="316" width="2" height="2" fill="#a4a4a4"/><rect x="700" y="317" width="2" height="2" fill="#fff"/><rect x="704" y="316" width="2" height="2" fill="#a4a4a4"/><rect x="705" y="317" width="2" height="2" fill="#fff"/><rect x="709" y="316" width="2" height="2" fill="#a4a4a4"/><rect x="710" y="317" width="2" height="2" fill="#fff"/><rect x="714" y="316" width="2" height="2" fill="#a4a4a4"/><rect x="715" y="317" width="2" height="2" fill="#fff"/><rect x="719" y="316" width="2" height="2" fill="#a4a4a4"/><rect x="720" y="317" width="2" height="2" fill="#fff"/><rect x="724" y="316" width="2" height="2" fill="#a4a4a4"/><rect x="725" y="317" width="2" height="2" fill="#fff"/><rect x="729" y="316" width="2" height="2" fill="#a4a4a4"/><rect x="730" y="317" width="2" height="2" fill="#fff"/><rect x="734" y="316" width="2" height="2" fill="#a4a4a4"/><rect x="735" y="317" width="2" height="2" fill="#fff"/><rect x="739" y="316" width="2" height="2" fill="#a4a4a4"/><rect x="740" y="317" width="2" height="2" fill="#fff"/><rect x="744" y="316" width="2" height="2" fill="#a4a4a4"/><rect x="745" y="317" width="2" height="2" fill="#fff"/><rect x="749" y="316" width="2" height="2" fill="#a4a4a4"/><rect x="750" y="317" width="2" height="2" fill="#fff"/><rect x="754" y="316" width="2" height="2" fill="#a4a4a4"/><rect x="755" y="317" width="2" height="2" fill="#fff"/><rect x="759" y="316" width="2" height="2" fill="#a4a4a4"/><rect x="760" y="317" width="2" height="2" fill="#fff"/><rect x="764" y="316" width="2" height="2" fill="#a4a4a4"/><rect x="765" y="317" width="2" height="2" fill="#fff"/></svg>
<div class="a" style="left:297px;top:330px;width:707px;height:142px;border:1px solid #c0c0c0;border-radius:3px;background:#d6d6d6"></div>
<div class="a" style="left:299px;top:331px;width:689px;height:123px;overflow:hidden;background:#f2f2f2">
<div class="a" style="left:0px;top:0px;width:23px;height:24px;border:1px solid #787878;border-radius:1px;background:linear-gradient(#e2e2e2,#cbcbcb)"></div>
<div class="a" style="left:23px;top:0px;width:100px;height:24px;border:1px solid #787878;border-radius:1px;background:linear-gradient(#e2e2e2,#cbcbcb)"></div>
<div class="cell" style="left:23px;top:6px;width:100px;text-align:center;padding-left:0px;">id_obs</div>
<div class="a" style="left:123px;top:0px;width:100px;height:24px;border:1px solid #787878;border-radius:1px;background:linear-gradient(#e2e2e2,#cbcbcb)"></div>
<div class="cell" style="left:123px;top:6px;width:100px;text-align:center;padding-left:0px;">date_obs</div>
<div class="a" style="left:223px;top:0px;width:100px;height:24px;border:1px solid #787878;border-radius:1px;background:linear-gradient(#e2e2e2,#cbcbcb)"></div>
<div class="cell" style="left:223px;top:6px;width:100px;text-align:center;padding-left:0px;">date_debut_obs</div>
<div class="a" style="left:323px;top:0px;width:100px;height:24px;border:1px solid #787878;border-radius:1px;background:linear-gradient(#e2e2e2,#cbcbcb)"></div>
<div class="cell" style="left:323px;top:6px;width:100px;text-align:center;padding-left:0px;">date_fin_obs</div>
<div class="a" style="left:423px;top:0px;width:100px;height:24px;border:1px solid #787878;border-radius:1px;background:linear-gradient(#e2e2e2,#cbcbcb)"></div>
<div class="cell" style="left:423px;top:6px;width:100px;text-align:center;padding-left:0px;">date_textuelle</div>
<div class="a" style="left:523px;top:0px;width:100px;height:24px;border:1px solid #787878;border-radius:1px;background:linear-gradient(#e2e2e2,#cbcbcb)"></div>
<div class="cell" style="left:523px;top:6px;width:100px;text-align:center;padding-left:0px;">heure_obs</div>
<div class="a" style="left:623px;top:0px;width:100px;height:24px;border:1px solid #787878;border-radius:1px;background:linear-gradient(#e2e2e2,#cbcbcb)"></div>
<div class="cell" style="left:623px;top:6px;width:100px;text-align:right;padding-left:0px;width:66px;left:623px">regne</div>
<div class="a" style="left:0px;top:24px;width:23px;height:30px;border:1px solid #787878;border-radius:1px;background:linear-gradient(#e2e2e2,#cbcbcb)"></div>
<div class="cell" style="left:0px;top:30px;width:23px;text-align:left;padding-left:4px;top:33px">1</div>
<div class="a" style="left:23px;top:24px;width:101px;height:31px;border:1px solid #b8b8b8"></div>
<div class="cell" style="left:26px;top:33px">6</div>
<div class="a" style="left:123px;top:24px;width:101px;height:31px;border:1px solid #b8b8b8"></div>
<div class="cell" style="left:126px;top:33px">2014-05-08</div>
<div class="a" style="left:223px;top:24px;width:101px;height:31px;border:1px solid #b8b8b8"></div>
<div class="cell i" style="left:226px;top:33px">NULL</div>
<div class="a" style="left:323px;top:24px;width:101px;height:31px;border:1px solid #b8b8b8"></div>
<div class="cell i" style="left:326px;top:33px">NULL</div>
<div class="a" style="left:423px;top:24px;width:101px;height:31px;border:1px solid #b8b8b8"></div>
<div class="cell i" style="left:426px;top:33px">NULL</div>
<div class="a" style="left:523px;top:24px;width:101px;height:31px;border:1px solid #b8b8b8"></div>
<div class="cell i" style="left:526px;top:33px">NULL</div>
<div class="a" style="left:623px;top:24px;width:101px;height:31px;border:1px solid #b8b8b8"></div>
<div class="cell" style="left:626px;top:33px">Animalia</div>
<div class="a" style="left:0px;top:54px;width:23px;height:30px;border:1px solid #787878;border-radius:1px;background:linear-gradient(#e2e2e2,#cbcbcb)"></div>
<div class="cell" style="left:0px;top:60px;width:23px;text-align:left;padding-left:4px;top:63px">2</div>
<div class="a" style="left:23px;top:54px;width:101px;height:31px;border:1px solid #b8b8b8"></div>
<div class="cell" style="left:26px;top:63px">146</div>
<div class="a" style="left:123px;top:54px;width:101px;height:31px;border:1px solid #b8b8b8"></div>
<div class="cell" style="left:126px;top:63px">2016-03-16</div>
<div class="a" style="left:223px;top:54px;width:101px;height:31px;border:1px solid #b8b8b8"></div>
<div class="cell i" style="left:226px;top:63px">NULL</div>
<div class="a" style="left:323px;top:54px;width:101px;height:31px;border:1px solid #b8b8b8"></div>
<div class="cell i" style="left:326px;top:63px">NULL</div>
<div class="a" style="left:423px;top:54px;width:101px;height:31px;border:1px solid #b8b8b8"></div>
<div class="cell i" style="left:426px;top:63px">NULL</div>
<div class="a" style="left:523px;top:54px;width:101px;height:31px;border:1px solid #b8b8b8"></div>
<div class="cell" style="left:526px;top:63px">14:00:00</div>
<div class="a" style="left:623px;top:54px;width:101px;height:31px;border:1px solid #b8b8b8"></div>
<div class="cell" style="left:626px;top:63px">Plantae</div>
<div class="a" style="left:0px;top:84px;width:23px;height:30px;border:1px solid #787878;border-radius:1px;background:linear-gradient(#e2e2e2,#cbcbcb)"></div>
<div class="cell" style="left:0px;top:90px;width:23px;text-align:left;padding-left:4px;top:93px">3</div>
<div class="a" style="left:23px;top:84px;width:101px;height:31px;border:1px solid #b8b8b8"></div>
<div class="cell" style="left:26px;top:93px">372</div>
<div class="a" style="left:123px;top:84px;width:101px;height:31px;border:1px solid #b8b8b8"></div>
<div class="cell" style="left:126px;top:93px">2016-04-06</div>
<div class="a" style="left:223px;top:84px;width:101px;height:31px;border:1px solid #b8b8b8"></div>
<div class="cell i" style="left:226px;top:93px">NULL</div>
<div class="a" style="left:323px;top:84px;width:101px;height:31px;border:1px solid #b8b8b8"></div>
<div class="cell i" style="left:326px;top:93px">NULL</div>
<div class="a" style="left:423px;top:84px;width:101px;height:31px;border:1px solid #b8b8b8"></div>
<div class="cell i" style="left:426px;top:93px">NULL</div>
<div class="a" style="left:523px;top:84px;width:101px;height:31px;border:1px solid #b8b8b8"></div>
<div class="cell" style="left:526px;top:93px">16:00:00</div>
<div class="a" style="left:623px;top:84px;width:101px;height:31px;border:1px solid #b8b8b8"></div>
<div class="cell" style="left:626px;top:93px">Animalia</div>
<div class="a" style="left:0px;top:114px;width:23px;height:30px;border:1px solid #787878;border-radius:1px;background:linear-gradient(#e2e2e2,#cbcbcb)"></div>
<div class="a" style="left:23px;top:114px;width:101px;height:31px;border:1px solid #b8b8b8"></div>
<div class="a" style="left:123px;top:114px;width:101px;height:31px;border:1px solid #b8b8b8"></div>
<div class="a" style="left:223px;top:114px;width:101px;height:31px;border:1px solid #b8b8b8"></div>
<div class="a" style="left:323px;top:114px;width:101px;height:31px;border:1px solid #b8b8b8"></div>
<div class="a" style="left:423px;top:114px;width:101px;height:31px;border:1px solid #b8b8b8"></div>
<div class="a" style="left:523px;top:114px;width:101px;height:31px;border:1px solid #b8b8b8"></div>
<div class="a" style="left:623px;top:114px;width:101px;height:31px;border:1px solid #b8b8b8"></div>
</div>
<svg style="left:988px;top:331px" width="15" height="124"><defs><pattern id="ck3" width="2" height="2" patternUnits="userSpaceOnUse"><rect width="2" height="2" fill="#f2f2f2"/><rect width="1" height="1" fill="#d4d4d4"/><rect x="1" y="1" width="1" height="1" fill="#d4d4d4"/></pattern></defs><rect width="15" height="124" fill="url(#ck3)"/></svg>
<div class="a" style="left:988px;top:332px;width:15px;height:15px;border:1px solid #7a7a7a;border-radius:2px;background:linear-gradient(#f0f0f0,#d4d4d4)"></div>
<svg style="left:0;top:0" width="1032" height="681"><path d="M991.5 341.5 L999.5 341.5 L995.5 337.0 Z" fill="#111"/></svg>
<div class="a" style="left:988px;top:346px;width:15px;height:26px;border:1px solid #6e6e6e;border-radius:2px;background:linear-gradient(90deg,#ececec,#d2d2d2)"></div>
<div class="a" style="left:988px;top:422px;width:15px;height:16px;border:1px solid #7a7a7a;border-radius:2px;background:linear-gradient(#f0f0f0,#d4d4d4)"></div>
<svg style="left:0;top:0" width="1032" height="681"><path d="M991.5 432.0 L999.5 432.0 L995.5 427.5 Z" fill="#111"/></svg>
<div class="a" style="left:988px;top:437px;width:15px;height:16px;border:1px solid #7a7a7a;border-radius:2px;background:linear-gradient(#f0f0f0,#d4d4d4)"></div>
<svg style="left:0;top:0" width="1032" height="681"><path d="M991.5 443.0 L999.5 443.0 L995.5 447.5 Z" fill="#111"/></svg>
<svg style="left:299px;top:454px" width="689" height="16"><defs><pattern id="ck4" width="2" height="2" patternUnits="userSpaceOnUse"><rect width="2" height="2" fill="#f2f2f2"/><rect width="1" height="1" fill="#d4d4d4"/><rect x="1" y="1" width="1" height="1" fill="#d4d4d4"/></pattern></defs><rect width="689" height="16" fill="url(#ck4)"/></svg>
<div class="a" style="left:299px;top:454px;width:16px;height:16px;border:1px solid #7a7a7a;border-radius:2px;background:linear-gradient(#f0f0f0,#d4d4d4)"></div>
<svg style="left:0;top:0" width="1032" height="681"><path d="M309.0 458.0 L309.0 466.0 L304.5 462.0 Z" fill="#111"/></svg>
<div class="a" style="left:315px;top:454px;width:157px;height:16px;border:1px solid #6e6e6e;border-radius:2px;background:linear-gradient(#ececec,#d2d2d2)"></div>
<svg style="left:0;top:0" width="1032" height="681"><rect x="385" y="457" width="2" height="2" fill="#9c9c9c"/><rect x="386" y="458" width="1" height="1" fill="#f6f6f6"/><rect x="389" y="457" width="2" height="2" fill="#9c9c9c"/><rect x="390" y="458" width="1" height="1" fill="#f6f6f6"/><rect x="393" y="457" width="2" height="2" fill="#9c9c9c"/><rect x="394" y="458" width="1" height="1" fill="#f6f6f6"/><rect x="397" y="457" width="2" height="2" fill="#9c9c9c"/><rect x="398" y="458" width="1" height="1" fill="#f6f6f6"/><rect x="401" y="457" width="2" height="2" fill="#9c9c9c"/><rect x="402" y="458" width="1" height="1" fill="#f6f6f6"/><rect x="385" y="461" width="2" height="2" fill="#9c9c9c"/><rect x="386" y="462" width="1" height="1" fill="#f6f6f6"/><rect x="389" y="461" width="2" height="2" fill="#9c9c9c"/><rect x="390" y="462" width="1" height="1" fill="#f6f6f6"/><rect x="393" y="461" width="2" height="2" fill="#9c9c9c"/><rect x="394" y="462" width="1" height="1" fill="#f6f6f6"/><rect x="397" y="461" width="2" height="2" fill="#9c9c9c"/><rect x="398" y="462" width="1" height="1" fill="#f6f6f6"/><rect x="401" y="461" width="2" height="2" fill="#9c9c9c"/><rect x="402" y="462" width="1" height="1" fill="#f6f6f6"/><rect x="385" y="465" width="2" height="2" fill="#9c9c9c"/><rect x="386" y="466" width="1" height="1" fill="#f6f6f6"/><rect x="389" y="465" width="2" height="2" fill="#9c9c9c"/><rect x="390" y="466" width="1" height="1" fill="#f6f6f6"/><rect x="393" y="465" width="2" height="2" fill="#9c9c9c"/><rect x="394" y="466" width="1" height="1" fill="#f6f6f6"/><rect x="397" y="465" width="2" height="2" fill="#9c9c9c"/><rect x="398" y="466" width="1" height="1" fill="#f6f6f6"/><rect x="401" y="465" width="2" height="2" fill="#9c9c9c"/><rect x="402" y="466" width="1" height="1" fill="#f6f6f6"/></svg>
<div class="a" style="left:956px;top:454px;width:16px;height:16px;border:1px solid #7a7a7a;border-radius:2px;background:linear-gradient(#f0f0f0,#d4d4d4)"></div>
<svg style="left:0;top:0" width="1032" height="681"><path d="M966.0 458.0 L966.0 466.0 L961.5 462.0 Z" fill="#111"/></svg>
<div class="a" style="left:971px;top:454px;width:16px;height:16px;border:1px solid #7a7a7a;border-radius:2px;background:linear-gradient(#f0f0f0,#d4d4d4)"></div>
<svg style="left:0;top:0" width="1032" height="681"><path d="M977.0 458.0 L977.0 466.0 L981.5 462.0 Z" fill="#111"/></svg>
<div class="red" style="left:294px;top:327px;width:714px;height:150px"></div>
<div class="num" style="left:299px;top:335px;font-size:18px;font-weight:normal;-webkit-text-stroke:.45px #f00">3</div>
<div class="a" style="left:288px;top:495px;width:726px;height:146px;border:1px solid #bdbdbd;border-radius:3px;box-shadow:inset 1px 1px 0 #e0e0e0"></div>
<div class="a" style="left:291px;top:490px;width:232px;height:12px;background:#d6d6d6"></div>
<div class="num" style="left:275px;top:484px;font-size:18px;font-weight:normal;-webkit-text-stroke:.45px #f00">4</div>
<div class="a" style="left:296px;top:490px;width:12px;height:12px;border:1px solid #c2c2c2;border-radius:2px;background:linear-gradient(#f6f6f6,#e8e8e8)"></div>
<svg style="left:296px;top:490px" width="12" height="12"><path d="M3.2 3.2L8.8 8.8M8.8 3.2L3.2 8.8" stroke="#121212" stroke-width="2.5" stroke-linecap="round"/></svg>
<div class="red" style="left:292px;top:483px;width:21px;height:24px"></div>
<div class="t" style="left:314px;top:489px;letter-spacing:0.15px">Charger en tant que nouvelle couche</div>
<div class="a" style="left:300px;top:529px;width:12px;height:12px;border:1px solid #c2c2c2;border-radius:2px;background:linear-gradient(#f6f6f6,#e8e8e8)"></div>
<svg style="left:300px;top:529px" width="12" height="12"><path d="M3.2 3.2L8.8 8.8M8.8 3.2L3.2 8.8" stroke="#121212" stroke-width="2.5" stroke-linecap="round"/></svg>
<div class="t" style="left:317px;top:529px;">Colonne(s) avec des valeurs uniques</div>
<div class="a" style="left:534px;top:526px;width:89px;height:22px;border:1px solid #bcbcbc;border-radius:3px;background:#f2f2f2"></div>
<div class="a" style="left:607px;top:527px;width:15px;height:20px;border-left:1px solid #c4c4c4;border-radius:0 2px 2px 0;background:linear-gradient(#dedede,#cacaca)"></div>
<svg style="left:0;top:0" width="1032" height="681"><path d="M611.0 535.5 L619.0 535.5 L615.0 539.5 Z" fill="#151515"/></svg>
<div class="t" style="left:540px;top:529px;">id_obs</div>
<div class="red" style="left:298px;top:523px;width:327px;height:28px"></div>
<div class="num" style="left:616px;top:503px;font-size:17px">5</div>
<div class="a" style="left:631px;top:530px;width:12px;height:12px;border:1px solid #c2c2c2;border-radius:2px;background:linear-gradient(#f6f6f6,#e8e8e8)"></div>
<svg style="left:631px;top:530px" width="12" height="12"><path d="M3.2 3.2L8.8 8.8M8.8 3.2L3.2 8.8" stroke="#121212" stroke-width="2.5" stroke-linecap="round"/></svg>
<div class="t" style="left:649px;top:528px;letter-spacing:0.18px">Colonne de géométrie</div>
<div class="a" style="left:789px;top:526px;width:89px;height:22px;border:1px solid #bcbcbc;border-radius:3px;background:#f2f2f2"></div>
<div class="a" style="left:862px;top:527px;width:15px;height:20px;border-left:1px solid #c4c4c4;border-radius:0 2px 2px 0;background:linear-gradient(#dedede,#cacaca)"></div>
<svg style="left:0;top:0" width="1032" height="681"><path d="M866.0 535.5 L874.0 535.5 L870.0 539.5 Z" fill="#151515"/></svg>
<div class="t" style="left:795px;top:529px;">geometrie</div>
<div class="red" style="left:629px;top:522px;width:252px;height:28px"></div>
<div class="btn" style="left:928px;top:515px;width:75px;height:43px"><span style="top:6px">Récupérer</span><span style="top:22px">Colonnes</span></div>
<div class="t" style="left:299px;top:574px;">Nom de la couche</div>
<div class="a" style="left:407px;top:569px;width:494px;height:23px;border:1px solid #8e8e8e;border-radius:3px;background:#f2f2f2;box-shadow:inset 0 1px 0 #cfcfcf"></div>
<div class="t" style="left:413px;top:574px;letter-spacing:-0.45px">SICEN_obs_RP_pt</div>
<div class="red" style="left:405px;top:566px;width:114px;height:30px"></div>
<div class="num" style="left:526px;top:575px;font-size:17.5px">6</div>
<div class="btn" style="left:911px;top:567px;width:92px;height:27px;"><span style="top:6px"><span style="letter-spacing:.25px">Définir le filtre</span></span></div>
<div class="a" style="left:299px;top:609px;width:12px;height:12px;border:1px solid #c2c2c2;border-radius:2px;background:linear-gradient(#f6f6f6,#e8e8e8)"></div>
<div class="t" style="left:317px;top:609px;letter-spacing:0.1px">Éviter la sélection par l'id de l’entité</div>
<div class="num" style="left:900px;top:601px;font-size:18px">7</div>
<div class="btn" style="left:928px;top:603px;width:75px;height:27px;"><span style="top:6px">Charger !</span></div>
<div class="red" style="left:926px;top:600px;width:80px;height:33px"></div>
<svg style="left:0;top:0" width="1032" height="681"><clipPath id="gc"><path d="M1010.5 674 L1025 659.5 L1025 674 Z"/></clipPath><g clip-path="url(#gc)"><rect x="1010" y="658" width="16" height="17" fill="#b4b4b4"/><path d="M1010.0 675 L1026 659.0" stroke="#fff" stroke-width="1.6"/><path d="M1013.4 675 L1026 662.4" stroke="#fff" stroke-width="1.6"/><path d="M1016.8 675 L1026 665.8" stroke="#fff" stroke-width="1.6"/><path d="M1020.2 675 L1026 669.2" stroke="#fff" stroke-width="1.6"/></g></svg>
</body></html>
